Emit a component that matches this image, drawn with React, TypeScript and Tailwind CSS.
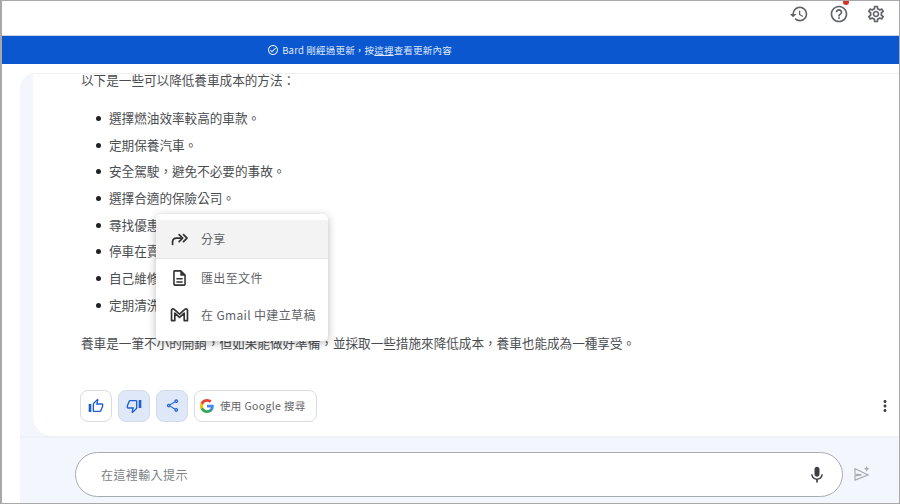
import React from 'react';
import {
  MdHistory,
  MdHelpOutline,
  MdOutlineSettings,
  MdOutlineCheckCircle,
  MdMic,
  MdOutlineThumbUp,
  MdOutlineThumbDown,
  MdOutlineShare,
  MdOutlineDescription,
  MdMoreVert,
} from 'react-icons/md';

const tips = [
  '選擇燃油效率較高的車款。',
  '定期保養汽車。',
  '安全駕駛，避免不必要的事故。',
  '選擇合適的保險公司。',
  '尋找優惠的停車場。',
  '停車在賣場或公有停車場。',
  '自己維修簡單的問題。',
  '定期清洗汽車。',
];

const GoogleLogo = () => (
  <svg viewBox="0 0 24 24" className="w-[14px] h-[14px]">
    <path fill="#4285F4" d="M23.5 12.3c0-.9-.1-1.600-.2-2.300H12v4.500h6.500c-.3 1.500-1.100 2.700-2.400 3.600v3h3.900c2.200-2.100 3.500-5.100 3.500-8.800z" />
    <path fill="#34A853" d="M12 24c3.200 0 6-1.100 8-2.900l-3.900-3c-1.100.7-2.500 1.200-4.100 1.200-3.100 0-5.800-2.100-6.700-5H1.200v3.100C3.200 21.300 7.300 24 12 24z" />
    <path fill="#FBBC05" d="M5.300 14.300c-.5-1.500-.5-3.100 0-4.600V6.600H1.200c-1.600 3.300-1.600 7.500 0 10.800l4.100-3.100z" />
    <path fill="#EA4335" d="M12 4.800c1.800 0 3.300.6 4.600 1.800l3.400-3.400C17.900 1.200 15.200 0 12 0 7.300 0 3.200 2.700 1.200 6.600l4.100 3.100c.9-2.800 3.600-4.900 6.700-4.900z" />
  </svg>
);

const GmailIcon = () => (
  <svg viewBox="0 0 20 16" className="w-[19px] h-[15px]" fill="none" stroke="#333" strokeWidth="1.800" strokeLinejoin="round">
    <path d="M1.500 14.500V3.500c0-1.500 1.500-2 2.500-1.200L10 7.500l6-5.200c1-.8 2.500-.3 2.500 1.200v11h-3.500V6.500L10 11 5 6.500v8z" />
  </svg>
);

const ShareArrow = () => (
  <svg viewBox="0 0 20 16" className="w-[18px] h-[14px]" fill="none" stroke="#333" strokeWidth="2" strokeLinecap="round" strokeLinejoin="round">
    <path d="M1.500 14v-2.500C1.500 8.500 3.500 7 6 7h6" />
    <path d="M9 3l4 4-4 4" />
    <path d="M14 3l4 4-4 4" />
  </svg>
);

const SendSpark = () => (
  <svg viewBox="0 0 18 16" className="w-[17px] h-[15px]" fill="none" stroke="#a5a8ad" strokeWidth="1.200">
    <path d="M1 3 15 9.500 1 15V10.500L8 9.500 1 8.500z" />
    <path d="M13.500 0l.9 2.100 2.100.9-2.100.9-.9 2.100-.9-2.100-2.100-.9 2.100-.9z" fill="#a5a8ad" stroke="none" />
  </svg>
);

const ActionButton = ({ active, children }: { active?: boolean; children: React.ReactNode }) => (
  <div className={`w-8 h-8 rounded-lg border flex items-center justify-center ${active ? 'bg-[#dfe8f8] border-[#d3dae6]' : 'bg-white border-[#dadce0]'}`}>
    {children}
  </div>
);

const MenuRow = ({ icon, label, hover }: { icon: React.ReactNode; label: string; hover?: boolean }) => (
  <div className={`flex items-center pl-[14px] ${hover ? 'h-[39px] bg-[#f3f3f3] border-b border-[#e6e6e6]' : 'h-[37px]'}`}>
    <span className="w-[19px] flex justify-center">{icon}</span>
    <span className="ml-[12px] text-[12px] tracking-[0.35px] text-[#5f6368]">{label}</span>
  </div>
);

export default function App() {
  return (
    <div className="w-[900px] h-[504px] overflow-hidden relative flex flex-col bg-white border-t border-l-2 border-r border-b border-[#a8a8a8] text-[#4a4d50] font-['Noto_Sans_CJK_TC','Noto_Sans_CJK_JP',sans-serif]">
      <header className="h-[34px] shrink-0 flex items-center justify-end pr-[13px] pb-[9px] text-[#5f6368]">
        <MdHistory size={20} className="mr-[20px]" />
        <div className="relative mr-[17px]">
          <MdHelpOutline size={20} />
          <span className="absolute -top-[5px] right-0 w-[6px] h-[6px] rounded-full bg-[#d93025]" />
        </div>
        <MdOutlineSettings size={20} />
      </header>
      <div className="h-[29px] shrink-0 bg-[#0b57d0] border-t border-[#c8d4ea] flex items-center justify-center pr-[182px] gap-[3px] text-[9.500px] tracking-[0.2px] text-[#dfe8f8]">
        <MdOutlineCheckCircle size={12} />
        <span>Bard 剛經過更新，按<span className="underline">這裡</span>查看更新內容</span>
      </div>
      <div className="h-[9px] shrink-0" />
      <div className="flex-1 flex flex-col min-h-0 ml-[18px] bg-[#f3f6fc] rounded-tl-[16px] border-t border-[#f0f0f0]">
        <main className="h-[362px] shrink-0 ml-[13px] bg-white rounded-bl-[20px] flex flex-col pl-[48px] pr-[5px] text-[12.600px]">
          <p className="-mt-[4px] leading-[20px]">以下是一些可以降低養車成本的方法：</p>
          <ul className="mt-[15px]">
            {tips.map(t => (
              <li key={t} className="h-[26.700px] flex items-center">
                <span className="w-[5px] h-[5px] rounded-full bg-[#202124] ml-[15px] mr-[8px]" />
                <span>{t}</span>
              </li>
            ))}
          </ul>
          <p className="mt-[14px] leading-[20px]">養車是一筆不小的開銷，但如果能做好準備，並採取一些措施來降低成本，養車也能成為一種享受。</p>
          <div className="mt-[37px] -ml-[1px] flex items-center gap-[6px]">
            <ActionButton><MdOutlineThumbUp size={16} color="#1f5fd0" /></ActionButton>
            <ActionButton active><MdOutlineThumbDown size={16} color="#1f5fd0" /></ActionButton>
            <ActionButton active><MdOutlineShare size={15} color="#1f5fd0" /></ActionButton>
            <div className="h-8 w-[123px] rounded-lg border border-[#dadce0] bg-white flex items-center pl-[5px] gap-[6px] text-[10.500px] tracking-[0.35px] text-[#5f6368]">
              <GoogleLogo />
              <span>使用 Google 搜尋</span>
            </div>
            <MdMoreVert size={18} className="ml-auto text-[#3c4043]" />
          </div>
        </main>
        <div className="flex-1 border-t-2 border-[#eef1f7] flex items-start pt-[14px] pl-[55px]">
          <div className="w-[768px] h-[45px] rounded-full border border-[#a8acb1] bg-white flex items-center pl-[25px] pr-[15px] text-[12px] tracking-[0.4px] text-[#7b7f84]">
            <span>在這裡輸入提示</span>
            <MdMic size={20} className="ml-auto text-[#3c4043]" />
          </div>
          <span className="ml-[11px] mt-[14px]"><SendSpark /></span>
        </div>
      </div>

      <div className="absolute left-[154px] top-[213px] w-[172px] h-[127px] bg-white rounded-[5px] shadow-[0_2px_8px_rgba(0,0,0,0.28)] pt-[6px]">
        <MenuRow hover label="分享" icon={<ShareArrow />} />
        <MenuRow label="匯出至文件" icon={<MdOutlineDescription size={20} className="text-[#333]" />} />
        <MenuRow label="在 Gmail 中建立草稿" icon={<GmailIcon />} />
      </div>
    </div>
  );
}
